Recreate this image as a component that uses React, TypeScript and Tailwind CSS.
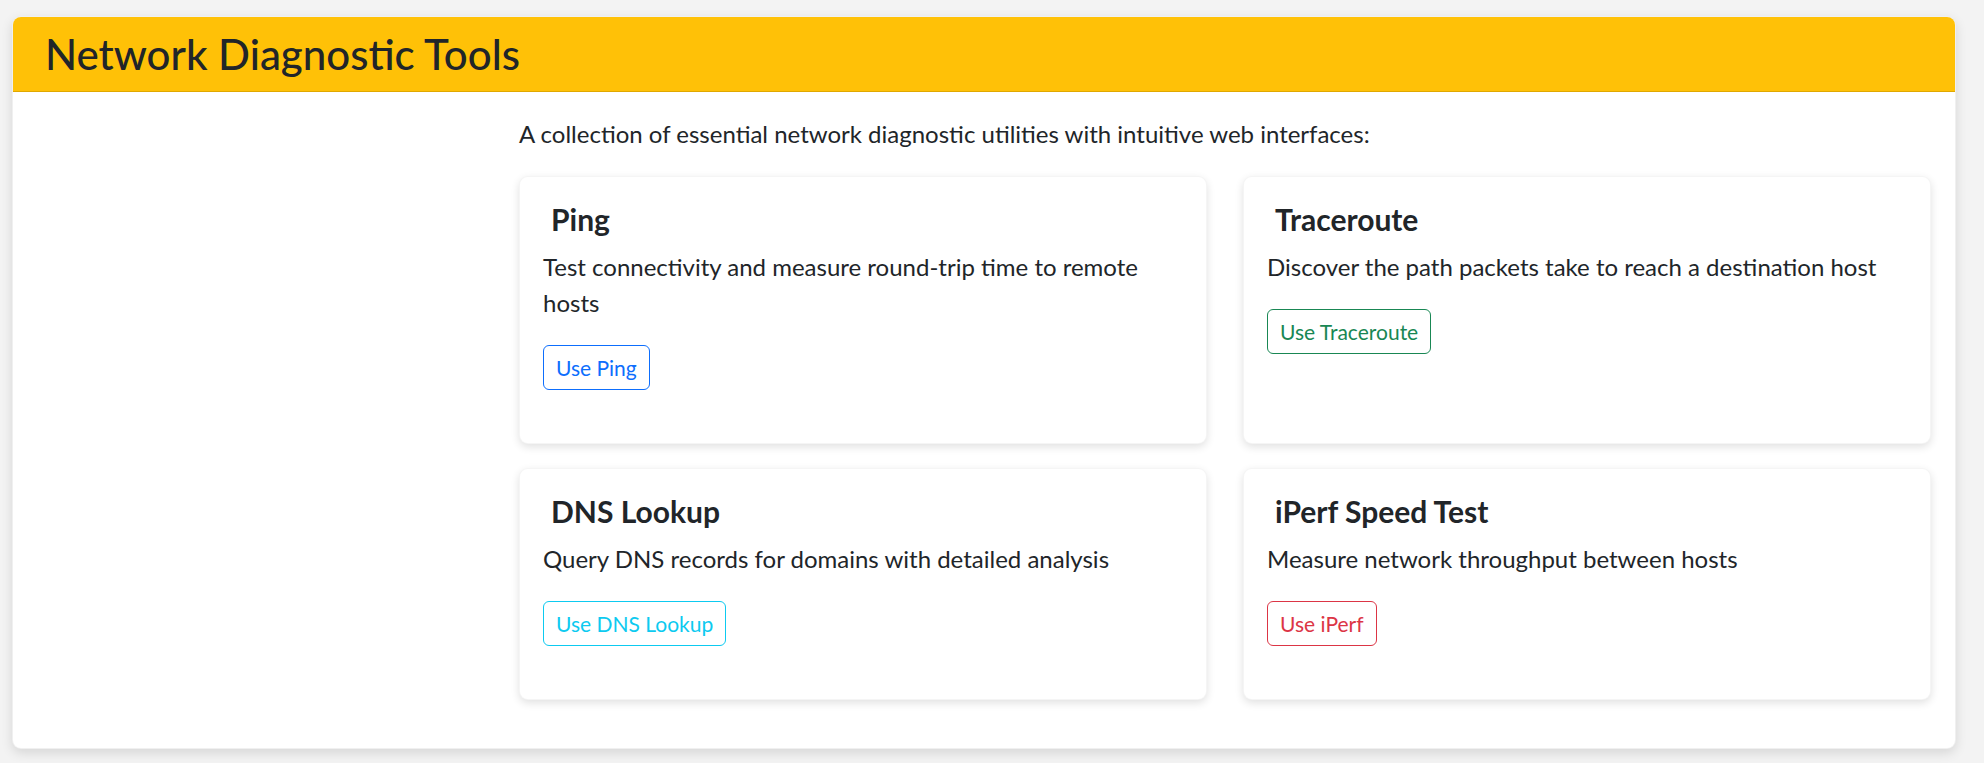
import { type ReactNode } from 'react';

interface Tool {
  title: string;
  description: string;
  action: string;
  tone: string;
}

const TOOLS: Tool[] = [
  {
    title: 'Ping',
    description: 'Test connectivity and measure round-trip time to remote hosts',
    action: 'Use Ping',
    tone: 'border-[#0d6efd] text-[#0d6efd]',
  },
  {
    title: 'Traceroute',
    description: 'Discover the path packets take to reach a destination host',
    action: 'Use Traceroute',
    tone: 'border-[#198754] text-[#198754]',
  },
  {
    title: 'DNS Lookup',
    description: 'Query DNS records for domains with detailed analysis',
    action: 'Use DNS Lookup',
    tone: 'border-[#0dcaf0] text-[#0dcaf0]',
  },
  {
    title: 'iPerf Speed Test',
    description: 'Measure network throughput between hosts',
    action: 'Use iPerf',
    tone: 'border-[#dc3545] text-[#dc3545]',
  },
];

function ToolCard({ tool }: { tool: Tool }): ReactNode {
  return (
    <div className="bg-white rounded-[9px] border border-black/[0.04] shadow-[0_3px_8px_rgba(0,0,0,0.12)] px-[23px] pt-[24px] pb-[53px]">
      <h5 className="ml-[8px] mb-[12px] text-[30px] leading-[36px] font-bold text-[#212529]">
        {tool.title}
      </h5>
      <p className="mb-[24px] text-[24px] leading-[36px] text-[#212529]">{tool.description}</p>
      <button
        className={`border rounded-[6px] bg-white px-[12px] py-[6px] text-[21px] leading-[31px] ${tool.tone}`}
      >
        {tool.action}
      </button>
    </div>
  );
}

export default function App() {
  return (
    <div
      className="min-h-screen bg-[#f3f3f3] pt-[16px] px-[12px] pb-[16px] text-[#212529]"
      style={{ fontFamily: 'Lato, "Noto Sans", sans-serif' }}
    >
      <div className="w-[1944px] rounded-[9px] bg-white border border-black/[0.06] shadow-[0_4px_12px_rgba(0,0,0,0.12)] overflow-hidden">
        {/* Header */}
        <div className="bg-[#ffc107] border-b border-[#e0a800] px-[24px] py-[12px]">
          <h3 className="ml-[8px] text-[42px] leading-[50px] font-medium text-[#212529]">
            Network Diagnostic Tools
          </h3>
        </div>

        {/* Body */}
        <div className="flex px-[24px] pt-[24px] pb-[24px]">
          <div className="w-[482px] shrink-0" />
          <div className="flex-1">
            <p className="text-[24px] leading-[36px] mb-[24px]">
              A collection of essential network diagnostic utilities with intuitive web interfaces:
            </p>
            <div className="grid grid-cols-2 gap-x-[36px] gap-y-[24px]">
              {TOOLS.map(tool => (
                <ToolCard key={tool.title} tool={tool} />
              ))}
            </div>
            <div className="h-[24px]" />
          </div>
        </div>
      </div>
    </div>
  );
}
